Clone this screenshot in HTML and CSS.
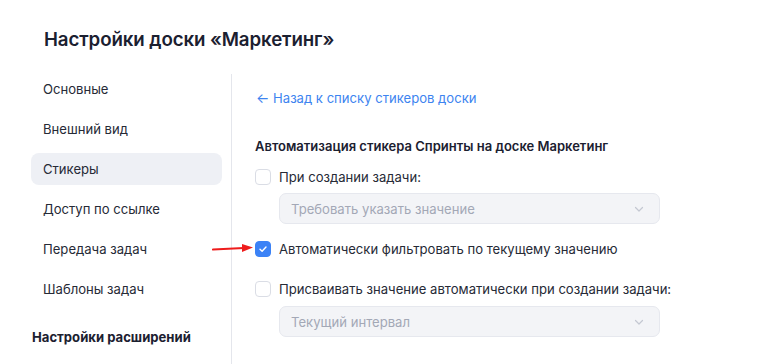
FILE: index.html
```html
<!DOCTYPE html>
<html lang="ru">
<head>
  <meta charset="UTF-8">
  <title>Настройки доски «Маркетинг»</title>
  <link rel="stylesheet" href="styles.css">
</head>
<body>
  <div class="page">
    <h1 class="title">Настройки доски «Маркетинг»</h1>
    <div class="layout">
      <!-- боковое меню -->
      <nav class="sidebar">
        <a class="nav-item">Основные</a>
        <a class="nav-item">Внешний вид</a>
        <a class="nav-item active">Стикеры</a>
        <a class="nav-item">Доступ по ссылке</a>
        <a class="nav-item">Передача задач</a>
        <a class="nav-item">Шаблоны задач</a>
        <div class="nav-section">Настройки расширений</div>
      </nav>

      <!-- содержимое -->
      <main class="content">
        <a class="back-link"><span class="back-arrow">←</span> Назад к списку стикеров доски</a>
        <h2 class="section-title">Автоматизация стикера Спринты на доске Маркетинг</h2>

        <label class="check-row">
          <span class="checkbox"></span>
          При создании задачи:
        </label>
        <div class="select">
          <span>Требовать указать значение</span>
          <svg class="chevron" width="12" height="12" viewBox="0 0 12 12"><path d="M2.5 4.5 6 8l3.5-3.5" fill="none" stroke="#c4c8d2" stroke-width="1.2" stroke-linecap="round" stroke-linejoin="round"/></svg>
        </div>

        <label class="check-row marked">
          <svg class="pointer" width="42" height="10" viewBox="0 0 42 10"><path d="M1 6.5 L32 5" stroke="#ee1c1c" stroke-width="2.2" stroke-linecap="round"/><path d="M30 1 L41 4.6 L30 9 Z" fill="#ee1c1c"/></svg>
          <span class="checkbox checked">
            <svg width="10" height="10" viewBox="0 0 10 10"><path d="M2 5.2 4.1 7.2 8 3" fill="none" stroke="#fff" stroke-width="1.4" stroke-linecap="round" stroke-linejoin="round"/></svg>
          </span>
          Автоматически фильтровать по текущему значению
        </label>

        <label class="check-row spaced">
          <span class="checkbox"></span>
          Присваивать значение автоматически при создании задачи:
        </label>
        <div class="select second">
          <span>Текущий интервал</span>
          <svg class="chevron" width="12" height="12" viewBox="0 0 12 12"><path d="M2.5 4.5 6 8l3.5-3.5" fill="none" stroke="#c4c8d2" stroke-width="1.2" stroke-linecap="round" stroke-linejoin="round"/></svg>
        </div>
      </main>
    </div>
  </div>
</body>
</html>
```

FILE: styles.css
```css
body {
  margin: 0;
  background: #fff;
  font-family: Inter, "Noto Sans", sans-serif;
  color: #1f2330;
}
.page {
  padding: 28px 0 0 0;
}
.title {
  margin: 0 0 22px 44px;
  font-size: 18.7px;
  font-weight: 600;
  line-height: 24px;
  color: #1b2030;
  letter-spacing: -0.1px;
}
.layout {
  display: flex;
}
.sidebar {
  width: 191px;
  margin-left: 31px;
  padding-top: 0;
  margin-top: -1px;
  display: flex;
  flex-direction: column;
  gap: 8px;
}
.nav-item {
  display: block;
  height: 32px;
  line-height: 32px;
  padding-left: 12px;
  border-radius: 8px;
  font-size: 13.1px;
  color: #262a36;
}
.nav-item.active {
  background: #eef0f5;
}
.nav-section {
  margin-top: 8px;
  padding-left: 1px;
  line-height: 32px;
  font-size: 13.1px;
  font-weight: 700;
  color: #1b2030;
}
.content {
  margin-left: 9px;
  border-left: 1px solid #e4e6ec;
  padding: 12px 0 30px 23px;
  width: 405px;
}
.back-link {
  display: block;
  color: #3d84f0;
  font-size: 13.1px;
  line-height: 24px;
  margin-left: 1px;
}
.back-arrow {
  font-size: 14px;
}
.section-title {
  margin: 26px 0 9px 0;
  font-size: 13px;
  font-weight: 600;
  line-height: 20px;
  color: #1b2030;
}
.check-row {
  position: relative;
  display: flex;
  align-items: center;
  gap: 8px;
  height: 24px;
  font-size: 13.1px;
  color: #262a36;
  white-space: nowrap;
}
.check-row.marked {
  margin-top: 13px;
}
.check-row.spaced {
  margin-top: 16px;
}
.checkbox {
  width: 14px;
  height: 14px;
  border: 1px solid #dadde5;
  border-radius: 4px;
  background: #fff;
  display: flex;
  align-items: center;
  justify-content: center;
  flex-shrink: 0;
}
.checkbox.checked {
  background: #3b82f6;
  border-color: #3b82f6;
}
.pointer {
  position: absolute;
  left: -43px;
  top: 6px;
}
.select {
  box-sizing: border-box;
  margin: 4px 0 0 24px;
  height: 31px;
  border: 1px solid #e6e8ee;
  border-radius: 7px;
  background: #f3f4f7;
  display: flex;
  align-items: center;
  justify-content: space-between;
  padding: 0 14px 0 11px;
  font-size: 13.1px;
  color: #a3a8b6;
}
.select.second {
  margin-top: 5px;
}
```
